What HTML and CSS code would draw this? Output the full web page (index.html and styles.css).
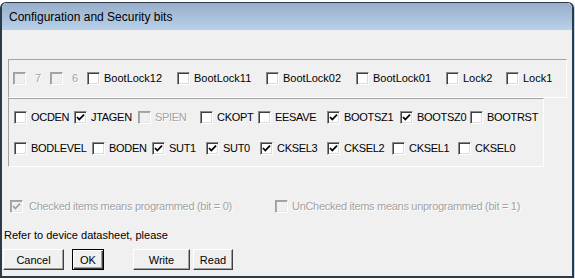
FILE: index.html
```html
<!DOCTYPE html>
<html lang="en">
<head>
  <meta charset="UTF-8">
  <title>Configuration and Security bits</title>
  <link rel="stylesheet" href="styles.css">
</head>
<body>
  <!-- Dialog window -->
  <div class="window">
    <div class="titlebar">Configuration and Security bits</div>

    <div class="client">
      <!-- Lock bits -->
      <div class="group group-lock">
        <div class="row row-lock">
          <label class="check disabled wide"><span class="cb"></span>7</label>
          <label class="check disabled wide"><span class="cb"></span>6</label>
          <label class="check"><span class="cb"></span>BootLock12</label>
          <label class="check"><span class="cb"></span>BootLock11</label>
          <label class="check"><span class="cb"></span>BootLock02</label>
          <label class="check"><span class="cb"></span>BootLock01</label>
          <label class="check"><span class="cb"></span>Lock2</label>
          <label class="check"><span class="cb"></span>Lock1</label>
        </div>
      </div>

      <!-- Fuse bits -->
      <div class="group group-fuse">
        <div class="row row-high">
          <label class="check"><span class="cb"></span>OCDEN</label>
          <label class="check"><span class="cb on"><svg viewBox="0 0 9 9"><path d="M1 4 L3.3 6.5 L8 1.6"/></svg></span>JTAGEN</label>
          <label class="check disabled"><span class="cb"></span>SPIEN</label>
          <label class="check"><span class="cb"></span>CKOPT</label>
          <label class="check"><span class="cb"></span>EESAVE</label>
          <label class="check"><span class="cb on"><svg viewBox="0 0 9 9"><path d="M1 4 L3.3 6.5 L8 1.6"/></svg></span>BOOTSZ1</label>
          <label class="check"><span class="cb on"><svg viewBox="0 0 9 9"><path d="M1 4 L3.3 6.5 L8 1.6"/></svg></span>BOOTSZ0</label>
          <label class="check"><span class="cb"></span>BOOTRST</label>
        </div>
        <div class="row row-low">
          <label class="check"><span class="cb"></span>BODLEVEL</label>
          <label class="check"><span class="cb"></span>BODEN</label>
          <label class="check"><span class="cb on"><svg viewBox="0 0 9 9"><path d="M1 4 L3.3 6.5 L8 1.6"/></svg></span>SUT1</label>
          <label class="check"><span class="cb on"><svg viewBox="0 0 9 9"><path d="M1 4 L3.3 6.5 L8 1.6"/></svg></span>SUT0</label>
          <label class="check"><span class="cb on"><svg viewBox="0 0 9 9"><path d="M1 4 L3.3 6.5 L8 1.6"/></svg></span>CKSEL3</label>
          <label class="check"><span class="cb on"><svg viewBox="0 0 9 9"><path d="M1 4 L3.3 6.5 L8 1.6"/></svg></span>CKSEL2</label>
          <label class="check"><span class="cb"></span>CKSEL1</label>
          <label class="check"><span class="cb"></span>CKSEL0</label>
        </div>
      </div>

      <!-- Legend -->
      <div class="legend">
        <label class="check disabled legend-first"><span class="cb on"><svg viewBox="0 0 9 9"><path d="M1 4 L3.3 6.5 L8 1.6"/></svg></span>Checked items means programmed (bit = 0)</label>
        <label class="check disabled"><span class="cb"></span>UnChecked items means unprogrammed (bit = 1)</label>
      </div>

      <div class="note">Refer to device datasheet, please</div>

      <!-- Action buttons -->
      <div class="actions">
        <button class="btn btn-cancel">Cancel</button>
        <button class="btn btn-ok default">OK</button>
        <button class="btn btn-write">Write</button>
        <button class="btn btn-read">Read</button>
      </div>
    </div>
  </div>
</body>
</html>
```

FILE: styles.css
```css
/* Page */
body {
  margin: 0;
  background-color: #ffffff;
  font-family: "Liberation Sans", Arial, sans-serif;
  font-size: 11px;
  color: #000;
  overflow: hidden;
}

/* Window frame */
.window {
  margin-top: 2px;
  width: 574px;
  box-sizing: border-box;
  border: 2px solid #2c3b4a;
  border-top-width: 1px;
  border-radius: 6px 6px 0 0;
  box-shadow: 1px 0 0 #bcd4e8;
}

.titlebar {
  height: 27px;
  padding-left: 7px;
  display: flex;
  align-items: center;
  font-size: 12px;
  border-radius: 5px 5px 0 0;
  background: linear-gradient(#97adc9, #bad1eb);
}

.client {
  height: 246px;
  background-color: #f0f0f0;
  display: flex;
  flex-direction: column;
  align-items: flex-start;
}

/* Sunken group panels */
.group {
  margin-left: 6px;
  box-sizing: border-box;
  border: 1px solid;
  border-color: #a3a3a3 #ffffff #ffffff #a3a3a3;
}

.group-lock {
  margin-top: 29px;
  width: 559px;
  height: 39px;
  padding: 12px 0 0 4px;
}

.group-fuse {
  margin-top: 0;
  width: 536px;
  height: 69px;
  padding: 12px 0 0 5px;
  display: flex;
  flex-direction: column;
  gap: 18px;
  letter-spacing: -0.3px;
}

/* Checkbox rows */
.row {
  display: grid;
  height: 13px;
}

.row-lock { grid-template-columns: 37px 37px 90px 89px 90px 90px 60px auto; }
.row-high { grid-template-columns: 60px 64px 62px 58px 69px 73px 70px auto; }
.row-low  { grid-template-columns: 78px 60px 54px 54px 67px 65px 66px auto; }

.check {
  display: flex;
  align-items: center;
  gap: 4px;
  height: 13px;
  line-height: 13px;
  white-space: nowrap;
}

.check.wide { gap: 9px; }

.cb {
  flex: none;
  width: 13px;
  height: 13px;
  box-sizing: border-box;
  border: 1px solid;
  border-color: #8a8a8a #ffffff #ffffff #8a8a8a;
  box-shadow: inset 1px 1px 0 #404040, inset -1px -1px 0 #dcdcdc;
  background-color: #ffffff;
  padding: 1px;
}

.cb svg {
  display: block;
  width: 9px;
  height: 9px;
}

.cb path {
  fill: none;
  stroke: #000;
  stroke-width: 1.8;
}

.disabled {
  color: #a3a3a3;
  text-shadow: 1px 1px 0 #ffffff;
}

.disabled .cb {
  background-color: #f0f0f0;
  border-color: #a0a0a0 #ffffff #ffffff #a0a0a0;
  box-shadow: inset 1px 1px 0 #a8a8a8, inset -1px -1px 0 #e8e8e8;
}

.disabled .cb path {
  stroke: #a0a0a0;
}

/* Legend */
.legend {
  margin: 33px 0 0 8px;
  display: flex;
  letter-spacing: -0.3px;
}

.legend-first {
  width: 265px;
  gap: 6px;
}

.note {
  margin-top: 16px;
  padding-left: 2px;
  height: 13px;
  line-height: 13px;
}

/* Buttons */
.actions {
  margin: 7px 0 0 1px;
  display: flex;
}

.btn {
  height: 21px;
  box-sizing: border-box;
  padding: 0;
  font-family: "Liberation Sans", Arial, sans-serif;
  font-size: 11px;
  background-color: #f0f0f0;
  border: 1px solid;
  border-color: #ffffff #404040 #404040 #ffffff;
  box-shadow: inset -1px -1px 0 #a0a0a0;
}

.btn-cancel { width: 61px; }
.btn-ok { width: 32px; margin-left: 8px; }
.btn-write { width: 57px; margin-left: 29px; }
.btn-read { width: 40px; margin-left: 3px; }

.btn.default {
  border-color: #000;
  box-shadow: inset 1px 1px 0 #ffffff, inset -1px -1px 0 #404040, inset -2px -2px 0 #a0a0a0;
}
```
